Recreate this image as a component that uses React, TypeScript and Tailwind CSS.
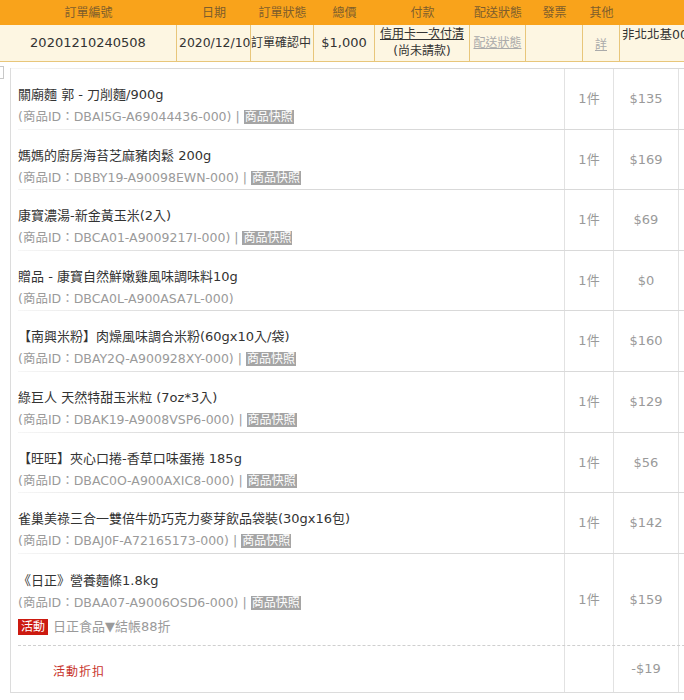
import React from 'react';

const items = [
    { name: '關廟麵 郭 - 刀削麵/900g', id: 'DBAI5G-A69044436-000', price: '$135', snap: true },
    { name: '媽媽的廚房海苔芝麻豬肉鬆 200g', id: 'DBBY19-A90098EWN-000', price: '$169', snap: true },
    { name: '康寶濃湯-新金黃玉米(2入)', id: 'DBCA01-A9009217I-000', price: '$69', snap: true },
    { name: '贈品 - 康寶自然鮮嫩雞風味調味料10g', id: 'DBCA0L-A900ASA7L-000', price: '$0', snap: false },
    { name: '【南興米粉】肉燥風味調合米粉(60gx10入/袋)', id: 'DBAY2Q-A900928XY-000', price: '$160', snap: true },
    { name: '綠巨人 天然特甜玉米粒 (7oz*3入)', id: 'DBAK19-A9008VSP6-000', price: '$129', snap: true },
    { name: '【旺旺】夾心口捲-香草口味蛋捲 185g', id: 'DBAC0O-A900AXIC8-000', price: '$56', snap: true },
    { name: '雀巢美祿三合一雙倍牛奶巧克力麥芽飲品袋裝(30gx16包)', id: 'DBAJ0F-A72165173-000', price: '$142', snap: true },
];

const last = { name: '《日正》營養麵條1.8kg', id: 'DBAA07-A9006OSD6-000', price: '$159' };

const headers = [
    ['訂單編號', 'w-[177px]'],
    ['日期', 'w-[74px]'],
    ['訂單狀態', 'w-[63px]'],
    ['總價', 'w-[61px]'],
    ['付款', 'w-[95px]'],
    ['配送狀態', 'w-[56px]'],
    ['發票', 'w-[57px]'],
    ['其他', 'w-[37px]'],
];

const Sep = () => (
    <div className="h-px bg-[linear-gradient(to_right,#f6f6f6,#d9d9d9_22%,#d9d9d9)]" />
);

const IdLine = ({ id, snap }: { id: string; snap: boolean }) => (
    <div className="h-[22px] leading-[22px] text-[12.5px] text-[#9a9a9a] whitespace-nowrap">
        (商品ID：{id}){snap && <> | <span className="bg-[#a5a5a5] text-white text-[12px] leading-[15px] px-px">商品快照</span></>}
    </div>
);

const Cells = ({ price, qty = '1件' }: { price: string; qty?: string }) => (
    <>
        <div className="w-[49px] shrink-0 border-l border-[#e2e2e2] flex items-center justify-center text-[13px] text-[#9a9a9a]">{qty}</div>
        <div className="w-[65px] shrink-0 border-l border-[#e2e2e2] flex items-center justify-center text-[13px] text-[#9a9a9a]">{price}</div>
        <div className="w-[60px] shrink-0 border-l border-[#e2e2e2]" />
    </>
);

export default function App() {
    return (
        <div className="w-[684px] h-[700px] overflow-hidden bg-white font-['DejaVu_Sans','Noto_Sans_CJK_TC',sans-serif] text-[#333]">
            <div className="flex h-[25px] bg-[#f9a31b] text-[12px] text-[#7d5d2c] items-center">
                {headers.map(([label, w]) => (
                    <div key={label} className={`${w} shrink-0 text-center`}>{label}</div>
                ))}
            </div>
            <div className="flex h-[37px] bg-[#fdf6e2] border-b border-[#e8c67a] text-[13px]">
                <div className="w-[177px] shrink-0 border-r border-[#e8c67a] flex items-center justify-center">20201210240508</div>
                <div className="w-[74px] shrink-0 border-r border-[#e8c67a] flex items-center whitespace-nowrap pl-[2px] text-[12.4px]">2020/12/10</div>
                <div className="w-[63px] shrink-0 border-r border-[#e8c67a] flex items-center text-[12px] whitespace-nowrap">訂單確認中</div>
                <div className="w-[61px] shrink-0 border-r border-[#e8c67a] flex items-center justify-center">$1,000</div>
                <div className="w-[95px] shrink-0 border-r border-[#e8c67a] flex flex-col items-center justify-center text-[12px] leading-[17px]">
                    <span className="underline">信用卡一次付清</span>
                    <span>(尚未請款)</span>
                </div>
                <div className="w-[56px] shrink-0 border-r border-[#e8c67a] flex items-center justify-center text-[12px] text-[#aaa] underline">配送狀態</div>
                <div className="w-[57px] shrink-0 border-r border-[#e8c67a]" />
                <div className="w-[37px] shrink-0 border-r border-[#e8c67a] flex items-center justify-center pt-[3px] text-[12px] text-[#aaa] underline">詳</div>
                <div className="flex-1 pl-[2px] pt-[1px] text-[12.5px] whitespace-nowrap">非北北基00</div>
            </div>
            <div className="flex items-start mt-[4px]">
                <div className="w-[4px] h-[13px] border border-l-0 border-[#c8c8c8] shrink-0" />
                <div className="w-[740px] shrink-0 ml-[6px] mt-[2px] border-l border-b border-[#dcdcdc]">
                    <Sep />
                    <div className="pl-[7px]">
                        {items.map((it) => (
                            <div key={it.id}>
                                <div className="flex">
                                    <div className="w-[546px] shrink-0 h-[59.6px] pt-[15px]">
                                        <div className="h-[22px] leading-[22px] text-[13px]">{it.name}</div>
                                        <IdLine id={it.id} snap={it.snap} />
                                    </div>
                                    <Cells price={it.price} />
                                </div>
                                <Sep />
                            </div>
                        ))}
                        <div className="flex">
                            <div className="w-[546px] shrink-0 h-[91px] pt-[16px]">
                                <div className="h-[22px] leading-[22px] text-[13px]">{last.name}</div>
                                <IdLine id={last.id} snap={true} />
                                <div className="mt-[2px] h-[22px] leading-[22px] text-[13px] text-[#9a9a9a] flex items-center">
                                    <span className="bg-[#cc1a10] text-white text-[12px] leading-[16px] px-[3px] mr-[5px]">活動</span>
                                    日正食品▼結帳88折
                                </div>
                            </div>
                            <Cells price={last.price} />
                        </div>
                        <div className="flex border-t border-dashed border-[#cfcfcf]">
                            <div className="w-[546px] shrink-0 h-[46px] flex items-center pl-[35px] pt-[6px] text-[12px] text-[#c8342c] tracking-[1px]">活動折扣</div>
                            <Cells price="-$19" qty="" />
                        </div>
                    </div>
                </div>
            </div>
        </div>
    );
}
